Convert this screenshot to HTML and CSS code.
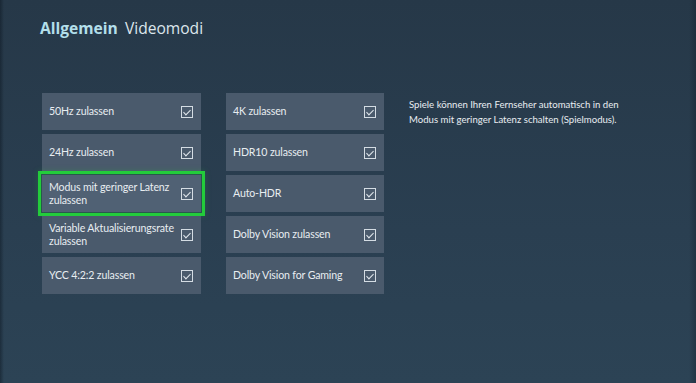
FILE: index.html
```html
<!DOCTYPE html>
<html lang="de">
<head>
  <meta charset="UTF-8">
  <title>Videomodi</title>
  <link rel="stylesheet" href="styles.css">
</head>
<body>

<div class="screen">
  <h1 class="title"><span class="crumb">Allgemein</span> Videomodi</h1>

  <div class="layout">
    <div class="column">
      <div class="tile"><span>50Hz zulassen</span><i class="check"></i></div>
      <div class="tile"><span>24Hz zulassen</span><i class="check"></i></div>
      <div class="tile focused"><span>Modus mit geringer Latenz<br>zulassen</span><i class="check"></i></div>
      <div class="tile"><span>Variable Aktualisierungsrate<br>zulassen</span><i class="check"></i></div>
      <div class="tile"><span>YCC 4:2:2 zulassen</span><i class="check"></i></div>
    </div>

    <div class="column">
      <div class="tile"><span>4K zulassen</span><i class="check"></i></div>
      <div class="tile"><span>HDR10 zulassen</span><i class="check"></i></div>
      <div class="tile"><span>Auto-HDR</span><i class="check"></i></div>
      <div class="tile"><span>Dolby Vision zulassen</span><i class="check"></i></div>
      <div class="tile"><span>Dolby Vision for Gaming</span><i class="check"></i></div>
    </div>

    <p class="info">Spiele können Ihren Fernseher automatisch in den<br>Modus mit geringer Latenz schalten (Spielmodus).</p>
  </div>
</div>

</body>
</html>
```

FILE: styles.css
```css
html, body {
  margin: 0;
  height: 100%;
}

body {
  font-family: "Open Sans", "Noto Sans", sans-serif;
  background: #283c4c;
  color: #e8edf1;
}

.screen {
  height: 100%;
  box-sizing: border-box;
  padding: 17px 0 0 40px;
  background:
    linear-gradient(90deg, rgba(10,20,30,0.45) 0, rgba(10,20,30,0) 4px, rgba(10,20,30,0) 99%, rgba(10,20,30,0.3) 100%),
    linear-gradient(180deg, #263848 0%, #2a3f51 60%, #2c4355 100%);
}

.title {
  margin: 0;
  font-size: 15.6px;
  line-height: 22px;
  font-weight: 400;
  color: #dde6ec;
}

.crumb {
  font-weight: 700;
  color: #b3dfea;
  margin-right: 3px;
}

.layout {
  display: flex;
  align-items: flex-start;
  margin-top: 54px;
  padding-left: 2px;
}

.column {
  display: flex;
  flex-direction: column;
  gap: 4px;
  width: 159px;
  margin-right: 25px;
}

.column + .column {
  width: 158px;
}

.tile {
  height: 37px;
  box-sizing: border-box;
  padding: 0 8px 0 7px;
  display: flex;
  align-items: center;
  justify-content: space-between;
  background: #4a5a6c;
  font-family: Lato, "Open Sans", sans-serif;
  font-size: 10.6px;
  line-height: 13px;
  letter-spacing: -0.15px;
}

.tile span {
  flex: 1;
  white-space: nowrap;
}

.focused {
  background: #506174;
  outline: 3px solid #23cc3b;
  outline-offset: 1px;
  box-shadow: 0 0 6px 4px rgba(35,204,59,0.22);
}

.check {
  flex: none;
  width: 10px;
  height: 10px;
  border: 1px solid #d4dce3;
  position: relative;
}

.check::after {
  content: "";
  position: absolute;
  left: 3px;
  top: 1px;
  width: 3px;
  height: 6px;
  border: solid #e3e9ee;
  border-width: 0 1.3px 1.3px 0;
  transform: rotate(45deg);
}

.info {
  margin: 4px 0 0;
  font-family: Lato, "Open Sans", sans-serif;
  font-size: 9.6px;
  line-height: 15px;
  color: #e8edf1;
}
```
